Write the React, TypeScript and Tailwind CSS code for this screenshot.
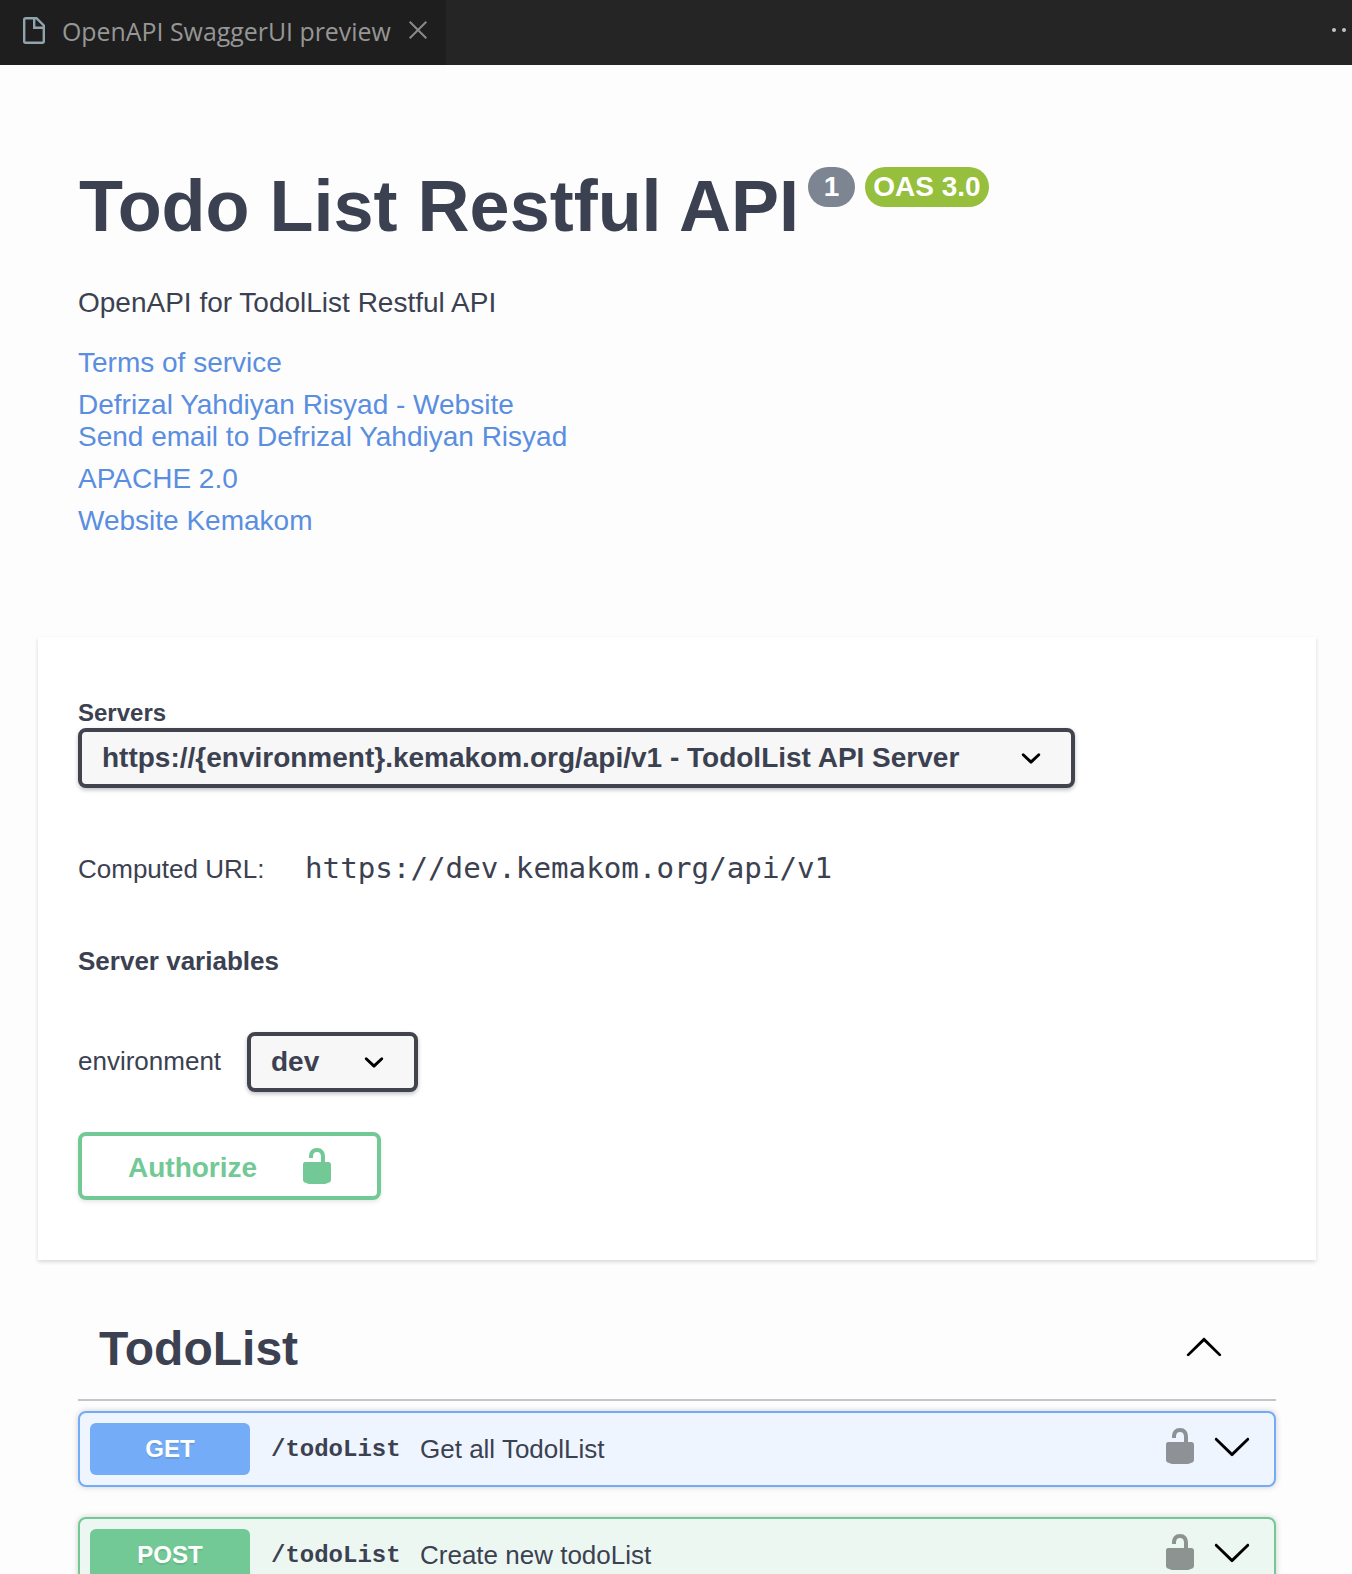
import React from "react";

const LOCK =
  "M15.8 8H14V5.6C14 2.703 12.665 1 10 1 7.334 1 6 2.703 6 5.6V6h2v-.801C8 3.754 8.797 3 10 3c1.203 0 2 .754 2 2.199V8H4c-.553 0-1 .646-1 1.199V17c0 .549.428 1.139.951 1.307l1.197.387C5.672 18.861 6.55 19 7.1 19h5.8c.549 0 1.428-.139 1.951-.307l1.196-.387c.524-.167.953-.757.953-1.306V9.199C17 8.646 16.352 8 15.8 8z";
const ARROW_DOWN =
  "M17.418 6.109c.272-.268.709-.268.979 0s.271.701 0 .969l-7.908 7.83c-.27.268-.707.268-.979 0l-7.908-7.83c-.27-.268-.27-.701 0-.969.271-.268.709-.268.979 0L10 13.25z";
const ARROW_UP =
  "M17.418 14.908c.272.268.709.268.979 0s.271-.701 0-.969l-7.908-7.83c-.27-.268-.707-.268-.979 0l-7.908 7.83c-.27.268-.27.701 0 .969.271.268.709.268.979 0L10 7.767z";
const SELECT_ARROW =
  "M13.418 7.859a.695.695 0 0 1 .978 0 .68.68 0 0 1 0 .969l-3.908 3.83a.697.697 0 0 1-.979 0l-3.908-3.83a.68.68 0 0 1 0-.969.695.695 0 0 1 .978 0L10 11z";

function Icon({ d, className = "" }: { d: string; className?: string }) {
  return (
    <svg viewBox="0 0 20 20" className={`size-10 shrink-0 fill-current ${className}`}>
      <path d={d} />
    </svg>
  );
}

function TabBar() {
  return (
    <header className="flex h-[65px] items-stretch justify-between overflow-hidden bg-[#252526]">
      <div className="flex w-[446px] items-center bg-[#1e1e1e] pb-[5px] pl-[23px] text-[#969696]">
        <svg viewBox="0 0 22 27" className="h-[27px] w-[22px] shrink-0 fill-none stroke-[#90a4ae] stroke-[2.4]">
          <path d="M2.5 1.2H13.5L20.8 8.5V24.3Q20.8 25.8 19.3 25.8H2.7Q1.2 25.8 1.2 24.3V2.7Q1.2 1.2 2.7 1.2Z" />
          <path d="M11.2 1V10.8H21" />
        </svg>
        <span className="ml-[17px] mt-[1px] w-[329px] whitespace-nowrap font-['Open_Sans','Noto_Sans',sans-serif] text-[24.9px] leading-8">
          OpenAPI SwaggerUI preview
        </span>
        <svg viewBox="0 0 18 18" className="ml-[18px] size-[18px] shrink-0 fill-none stroke-[#8a8a8a] stroke-2">
          <path d="M0.7 0.7L17.3 17.3M17.3 0.7L0.7 17.3" />
        </svg>
      </div>
      <div className="-mr-[4px] flex items-center gap-[6px] pb-[5px]">
        <i className="size-1 rounded-full bg-[#c5c5c5]" />
        <i className="size-1 rounded-full bg-[#c5c5c5]" />
        <i className="size-1 rounded-full bg-[#c5c5c5]" />
      </div>
    </header>
  );
}

function Select({ text, className }: { text: string; className: string }) {
  return (
    <div
      className={`flex h-[60px] items-center justify-between rounded-lg border-4 border-[#41444e] bg-[#f7f7f7] pl-5 pr-5 text-[28px] font-bold leading-8 shadow-[0_2px_4px_rgba(0,0,0,0.25)] ${className}`}
    >
      <span className="whitespace-nowrap">{text}</span>
      <Icon d={SELECT_ARROW} className="text-black" />
    </div>
  );
}

function Operation({
  method,
  summary,
  block,
  badge,
}: {
  method: string;
  summary: string;
  block: string;
  badge: string;
}) {
  return (
    <div
      className={`flex h-[76px] items-center rounded-lg border-2 pl-[10px] pr-[22px] shadow-[0_0_6px_rgba(0,0,0,0.19)] ${block}`}
    >
      <div
        className={`flex h-[52px] w-40 items-center justify-center rounded-md text-2xl font-bold text-white [text-shadow:0_2px_0_rgba(0,0,0,0.1)] ${badge}`}
      >
        {method}
      </div>
      <span className="ml-[21px] mt-[2px] w-[149px] font-['Liberation_Mono',monospace] text-2xl font-bold">
        /todoList
      </span>
      <span className="flex-1 text-[26px] leading-8">{summary}</span>
      <Icon d={LOCK} className="-mt-[6px] mr-3 opacity-40 text-black" />
      <Icon d={ARROW_DOWN} className="-mt-[6px] text-black" />
    </div>
  );
}

export default function App() {
  return (
    <div className="h-[1574px] overflow-hidden bg-[#fdfdfd] font-['Liberation_Sans',Arial,sans-serif] text-[#3b4151]">
      <TabBar />

      <section className="flex h-[572px] flex-col px-[78px] pt-[100px]">
        <div className="flex items-start">
          <h1 className="w-[727px] whitespace-nowrap pl-[1px] text-[72px] font-bold leading-[82px]">
            Todo List Restful API
          </h1>
          <div className="ml-[3px] mt-[2px] flex gap-[10px] text-[28px] font-bold leading-10 text-white">
            <span className="h-10 w-[47px] rounded-[20px] bg-[#7d8492] text-center">1</span>
            <span className="h-10 w-[124px] whitespace-nowrap rounded-[20px] bg-[#95bf3c] text-center">OAS 3.0</span>
          </div>
        </div>
        <p className="mt-10 text-[28px] leading-8">OpenAPI for TodolList Restful API</p>
        <div className="mt-7 flex flex-col items-start gap-[10px] text-[28px] leading-8 text-[#5a8ee0]">
          <a>Terms of service</a>
          <div className="flex flex-col">
            <a>Defrizal Yahdiyan Risyad - Website</a>
            <a>Send email to Defrizal Yahdiyan Risyad</a>
          </div>
          <a>APACHE 2.0</a>
          <a>Website Kemakom</a>
        </div>
      </section>

      <section className="ml-[38px] flex h-[623px] w-[1278px] flex-col items-start bg-white px-10 pt-[61px] shadow-[0_2px_4px_rgba(0,0,0,0.15)]">
        <label className="mb-[1px] text-2xl font-bold leading-[29px]">Servers</label>
        <Select text="https://{environment}.kemakom.org/api/v1 - TodolList API Server" className="w-[997px]" />
        <div className="mt-[64px] flex h-8 items-baseline text-[26px] leading-8">
          <span className="w-[227px]">Computed URL:</span>
          <code className="font-['DejaVu_Sans_Mono',monospace] text-[29.2px] leading-8">
            https://dev.kemakom.org/api/v1
          </code>
        </div>
        <h4 className="mt-[61px] text-[26px] font-bold leading-8">Server variables</h4>
        <div className="mt-[55px] flex items-center">
          <span className="w-[169px] pb-[2px] text-[26px] leading-8">environment</span>
          <Select text="dev" className="w-[171px]" />
        </div>
        <button className="mt-10 flex h-[68px] w-[303px] items-center justify-between rounded-lg border-4 border-[#72c995] pb-[1px] pl-[46px] pr-10 text-[28px] font-bold text-[#72c995] shadow-[0_2px_4px_rgba(0,0,0,0.1)]">
          <span className="mt-1">Authorize</span>
          <Icon d={LOCK} />
        </button>
      </section>

      <section className="flex flex-col px-[78px] pr-[76px] pt-[30px]">
        <div className="flex h-[111px] items-center justify-between border-b-2 border-[#c4c4ca] pl-[21px] pr-[52px]">
          <h3 className="mt-2 text-5xl font-bold">TodoList</h3>
          <Icon d={ARROW_UP} className="mt-[2px] text-black" />
        </div>
        <div className="mt-[10px] flex flex-col gap-[30px]">
          <Operation
            method="GET"
            summary="Get all TodolList"
            block="border-[#74abf8] bg-[#eef5fe]"
            badge="bg-[#74acf8]"
          />
          <Operation
            method="POST"
            summary="Create new todoList"
            block="border-[#72c995] bg-[#edf7f2]"
            badge="bg-[#72c995]"
          />
        </div>
      </section>
    </div>
  );
}
